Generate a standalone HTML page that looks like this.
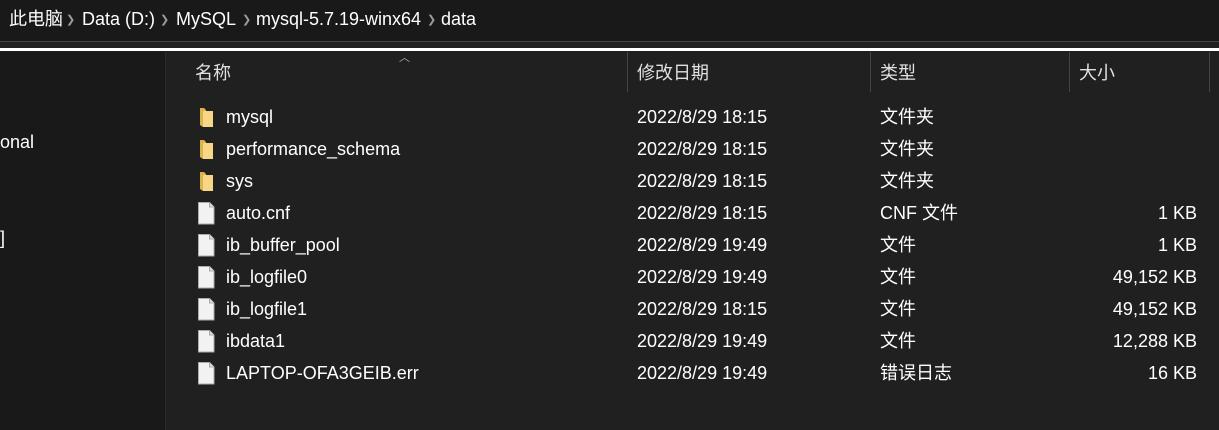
<!DOCTYPE html><html><head><meta charset="utf-8"><style>
body{margin:0;width:1219px;height:430px;background:#202020;position:relative;overflow:hidden;font-family:"Liberation Sans","Noto Sans CJK SC",sans-serif;color:#fff;font-size:18px}
.a{position:absolute;white-space:nowrap;line-height:24px}
.top{left:0;top:0;width:1219px;height:41px;background:#191919}
.crumb{top:7px;font-size:18px}
.chev{color:#9a9a9a;font-size:11px;top:8px}
.side{left:0;top:52px;width:165px;height:378px;background:#191919;border-right:1px solid #2b2b2b}
.hd{top:61px;color:#e0e0e0;font-size:18px}
.vs{top:52px;width:1px;height:40px;background:#444;line-height:0}
.row{font-size:18px;color:#fff}
</style></head><body>
<div class="a top"></div>
<div class="a crumb" style="left:9px">此电脑</div>
<div class="a chev" style="left:66px">❯</div>
<div class="a crumb" style="left:82px">Data (D:)</div>
<div class="a chev" style="left:160px">❯</div>
<div class="a crumb" style="left:176px">MySQL</div>
<div class="a chev" style="left:242px">❯</div>
<div class="a crumb" style="left:256px">mysql-5.7.19-winx64</div>
<div class="a chev" style="left:427px">❯</div>
<div class="a crumb" style="left:441px">data</div>
<div class="a" style="left:0;top:41px;width:1219px;height:1px;background:#444;line-height:0"></div>
<div class="a" style="left:0;top:48px;width:1219px;height:3px;background:#fff;line-height:0"></div>
<div class="a side"></div>
<div class="a" style="left:0;top:130px">onal</div>
<div class="a" style="left:0;top:226px">]</div>
<div class="a" style="left:399px;top:46px;color:#aaa;font-size:11px">︿</div>
<div class="a hd" style="left:195px">名称</div>
<div class="a vs" style="left:627px"></div>
<div class="a hd" style="left:637px">修改日期</div>
<div class="a vs" style="left:870px"></div>
<div class="a hd" style="left:880px">类型</div>
<div class="a vs" style="left:1069px"></div>
<div class="a hd" style="left:1079px">大小</div>
<div class="a vs" style="left:1209px"></div>
<div id="rows"></div>
<script>
var d=[["mysql","18:15","文件夹","",1],["performance_schema","18:15","文件夹","",1],["sys","18:15","文件夹","",1],["auto.cnf","18:15","CNF 文件","1 KB"],["ib_buffer_pool","19:49","文件","1 KB"],["ib_logfile0","19:49","文件","49,152 KB"],["ib_logfile1","18:15","文件","49,152 KB"],["ibdata1","19:49","文件","12,288 KB"],["LAPTOP-OFA3GEIB.err","19:49","错误日志","16 KB"]];
var h="";d.forEach(function(r,i){var c=117+i*32,y=c-12;
var ic=r[4]?'<svg class="a" style="left:199px;top:'+(c-10)+'px" width="16" height="21"><path d="M1 1h4l2 2v17H4l-3-2z" fill="#d9b54e"/><path d="M4 4h10v16H4z" fill="#f6d785"/></svg>':'<svg class="a" style="left:198px;top:'+(c-11)+'px" width="17" height="23"><path d="M0.5 0.5h11l4.5 4.5v17H0.5z" fill="#f2f2f2" stroke="#aaa"/><path d="M11.5 0.5v4.5h4.5" fill="#ddd" stroke="#aaa"/></svg>';
h+=ic+'<div class="a row" style="left:226px;top:'+y+'px">'+r[0]+'</div><div class="a row" style="left:637px;top:'+y+'px">2022/8/29 '+r[1]+'</div><div class="a row" style="left:880px;top:'+y+'px">'+r[2]+'</div><div class="a row" style="right:22px;top:'+y+'px">'+r[3]+'</div>';});
document.getElementById("rows").innerHTML=h;
</script>
</body></html>
